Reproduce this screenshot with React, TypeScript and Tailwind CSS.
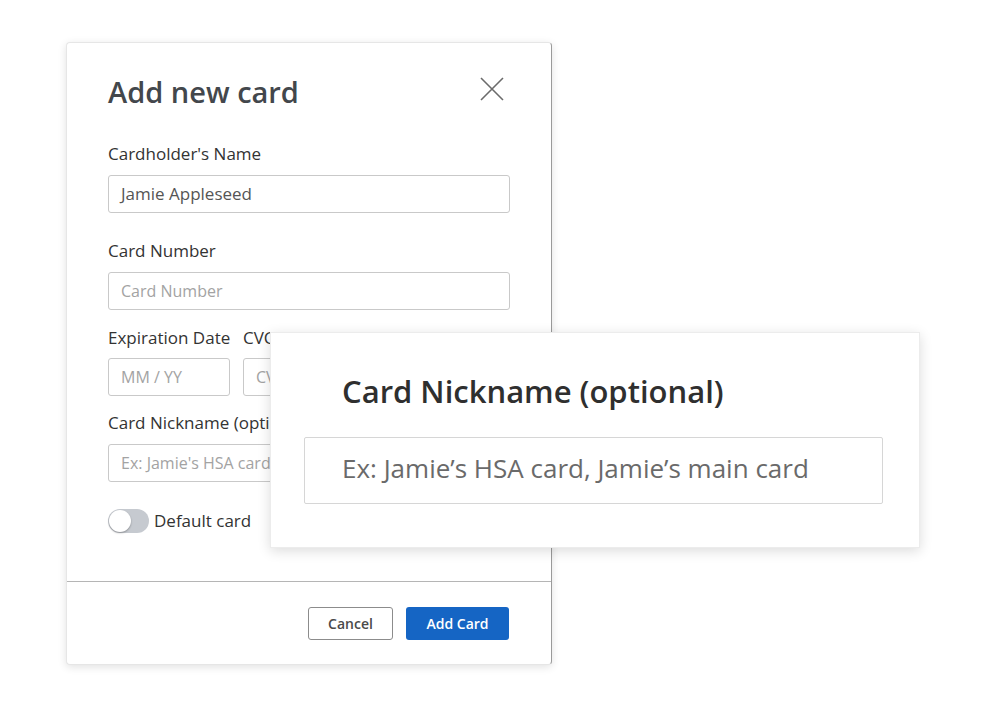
import React from 'react';

const Field: React.FC<{ label: string; value?: string; placeholder?: string }> = ({ label, value, placeholder }) => (
  <div>
    <div className="text-[17px] leading-6 text-[#333]">{label}</div>
    <div className="mt-[9px] h-[38px] border border-[#c9c9c9] rounded-[3px] px-3 flex items-center">
      {value ? (
        <span className="text-[17px] text-[#555]">{value}</span>
      ) : (
        <span className="text-[16px] text-[#a3a3a3]">{placeholder}</span>
      )}
    </div>
  </div>
);

export default function App() {
  return (
    <div className="relative min-h-screen bg-white font-['Open_Sans',sans-serif]">
      <div className="pl-[66px] pt-[42px]">
        <div className="w-[486px] h-[623px] bg-white rounded-[4px] border border-[#e6e6e6] border-r-[#9a9a9a] shadow-[0_2px_8px_rgba(0,0,0,0.12)] flex flex-col">
          <div className="flex-1 px-[41px] pt-[31px]">
            <div className="flex items-center justify-between">
              <h2 className="text-[29px] leading-9 font-semibold text-[#43474c]">Add new card</h2>
              <svg width="24" height="24" viewBox="0 0 24 24" className="mr-[6px] -mt-[6px]" fill="none" stroke="#6b6b6b" strokeWidth="1.6">
                <path d="M1 1 L23 23 M23 1 L1 23" />
              </svg>
            </div>

            <div className="mt-[32px]">
              <Field label="Cardholder's Name" value="Jamie Appleseed" />
            </div>
            <div className="mt-[26px]">
              <Field label="Card Number" placeholder="Card Number" />
            </div>

            <div className="mt-[16px] grid grid-cols-[122px_122px_1fr] gap-x-[13px]">
              <div className="text-[17px] leading-6 text-[#333] whitespace-nowrap">Expiration Date</div>
              <div className="text-[17px] leading-6 text-[#333]">CVC</div>
              <div className="text-[17px] leading-6 text-[#333] whitespace-nowrap">Billing Zip code</div>
              <div className="mt-[8px] h-[38px] border border-[#c9c9c9] rounded-[3px] px-3 flex items-center text-[16px] text-[#a3a3a3]">MM / YY</div>
              <div className="mt-[8px] h-[38px] border border-[#c9c9c9] rounded-[3px] px-3 flex items-center text-[16px] text-[#a3a3a3]">CVC</div>
              <div className="mt-[8px] h-[38px] border border-[#c9c9c9] rounded-[3px] px-3 flex items-center text-[16px] text-[#a3a3a3]">Zip</div>
            </div>

            <div className="mt-[15px]">
              <Field label="Card Nickname (optional)" placeholder="Ex: Jamie's HSA card, Jamie's main card" />
            </div>

            <div className="mt-[26px] flex items-center gap-[5px]">
              <div className="w-[41px] h-[24px] rounded-full bg-[#c6cad0] flex items-center p-[1px]">
                <div className="w-[22px] h-[22px] rounded-full bg-white shadow-[0_1px_2px_rgba(0,0,0,0.3)]" />
              </div>
              <span className="text-[17px] text-[#333]">Default card</span>
            </div>
          </div>

          <div className="h-[83px] border-t border-[#b5b5b5] flex items-center justify-end gap-[13px] pr-[42px]">
            <button className="w-[85px] h-[33px] rounded-[3px] border border-[#8c8c8c] bg-white text-[14px] font-semibold text-[#4a4a4a]">
              Cancel
            </button>
            <button className="w-[103px] h-[33px] rounded-[3px] bg-[#1565c4] text-[14px] font-semibold text-white">
              Add Card
            </button>
          </div>
        </div>
      </div>

      <div className="absolute left-[270px] top-[332px] w-[650px] h-[216px] bg-white border border-[#ececec] shadow-[0_3px_12px_rgba(0,0,0,0.14)] pl-[33px] pr-[36px] pt-[38px]">
        <h3 className="pl-[38px] text-[31px] leading-10 font-semibold text-[#2f2f2f]">Card Nickname (optional)</h3>
        <div className="mt-[26px] h-[67px] border border-[#d6d6d6] rounded-[2px] pl-[37px] pb-[4px] flex items-center text-[26px] text-[#6a6a6a]">
          Ex: Jamie’s HSA card, Jamie’s main card
        </div>
      </div>
    </div>
  );
}
